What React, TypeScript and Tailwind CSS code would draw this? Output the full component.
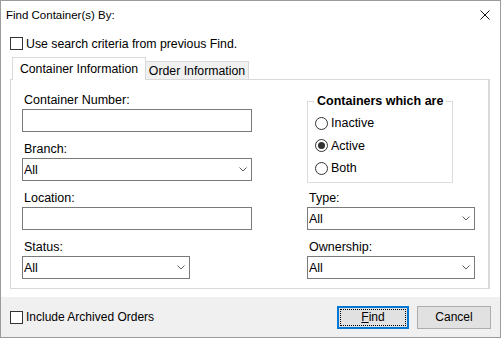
import React from "react";

const Chevron = () => (
  <svg width="8" height="5" viewBox="0 0 8 5" className="block">
    <path d="M0.5 0.5 L4 4 L7.5 0.5" fill="none" stroke="#606060" strokeWidth="1" />
  </svg>
);

function Label({ children }: { children: React.ReactNode }) {
  return <div className="h-[14px] leading-[14px] pl-[2px] mb-[2px]">{children}</div>;
}

function TextBox({ className }: { className: string }) {
  return <div className={`h-[23px] border border-[#7a7a7a] bg-white ${className}`} />;
}

function Select({ className }: { className: string }) {
  return (
    <div className={`h-[23px] border border-[#7a7a7a] bg-white flex items-center justify-between pl-[1px] pr-[4px] ${className}`}>
      <span className="leading-[14px]">All</span>
      <Chevron />
    </div>
  );
}

function CheckBox() {
  return <div className="w-[13px] h-[13px] border border-[#333333] bg-white shrink-0" />;
}

function Radio({ checked, label }: { checked?: boolean; label: string }) {
  return (
    <div className="h-[22.5px] flex items-center">
      <div className="w-[13px] h-[13px] rounded-full border border-[#333333] bg-white flex items-center justify-center shrink-0">
        {checked && <div className="w-[7px] h-[7px] rounded-full bg-[#333333]" />}
      </div>
      <span className="ml-[3px] leading-[14px]">{label}</span>
    </div>
  );
}

export default function App() {
  return (
    <div className="w-[501px] h-[338px] border border-[#9b9b9b] bg-white flex flex-col text-[12px] text-black font-['Liberation_Sans',Arial,sans-serif] overflow-hidden">
      {/* title bar */}
      <div className="h-[28px] shrink-0 flex items-center justify-between pl-[5px] pr-[10px]">
        <span className="leading-[14px] text-[11.5px]">Find Container(s) By:</span>
        <svg width="10" height="10" viewBox="0 0 10 10" className="block">
          <path d="M0.5 0.5 L9.5 9.5 M9.5 0.5 L0.5 9.5" stroke="#111" strokeWidth="1" fill="none" />
        </svg>
      </div>

      {/* use previous */}
      <div className="mt-[8px] h-[13px] flex items-center pl-[9px] shrink-0 text-[12.3px]">
        <CheckBox />
        <span className="ml-[3px] leading-[14px]">Use search criteria from previous Find.</span>
      </div>

      {/* tabs */}
      <div className="mt-[7px] h-[22px] flex items-end pl-[11px] shrink-0 relative z-10 text-[12.3px]">
        <div className="w-[134px] h-[23px] -mb-[1px] border-l border-t border-r border-[#d9d9d9] bg-white flex items-start justify-center pt-[4px]">
          <span className="leading-[14px]">Container Information</span>
        </div>
        <div className="w-[104px] h-[18px] -ml-[1px] border border-b-0 border-[#d9d9d9] bg-[#f0f0f0] flex items-center justify-center">
          <span className="leading-[14px]">Order Information</span>
        </div>
      </div>

      {/* panel */}
      <div className="ml-[9px] w-[480px] h-[210px] border border-[#d9d9d9] border-r-2 bg-white flex shrink-0 text-[12.5px]">
        <div className="ml-[11px] mt-[13px] w-[230px] flex flex-col gap-[10px]">
          <div>
            <Label>Container Number:</Label>
            <TextBox className="w-[230px]" />
          </div>
          <div>
            <Label>Branch:</Label>
            <Select className="w-[230px]" />
          </div>
          <div>
            <Label>Location:</Label>
            <TextBox className="w-[230px]" />
          </div>
          <div>
            <Label>Status:</Label>
            <Select className="w-[168px]" />
          </div>
        </div>

        <div className="ml-[55px] mt-[14px] w-[168px] flex flex-col">
          <fieldset className="w-[146px] h-[89px] border border-[#dcdcdc]">
            <legend className="ml-[6px] px-[3px] font-bold leading-[14px]">Containers which are</legend>
            <div className="pl-[7px] pt-[4px]">
              <Radio label="Inactive" />
              <Radio label="Active" checked />
              <Radio label="Both" />
            </div>
          </fieldset>
          <div className="mt-[8px]">
            <Label>Type:</Label>
            <Select className="w-[168px]" />
          </div>
          <div className="mt-[10px]">
            <Label>Ownership:</Label>
            <Select className="w-[168px]" />
          </div>
        </div>
      </div>

      <div className="h-[8px] shrink-0" />

      {/* footer */}
      <div className="flex-1 bg-[#f0f0f0] flex items-center justify-between pl-[9px] pr-[9px]">
        <div className="flex items-center">
          <CheckBox />
          <span className="ml-[3px] leading-[14px]">Include Archived Orders</span>
        </div>
        <div className="flex items-center gap-[8px]">
          <div className="w-[72px] h-[23px] border-2 border-[#0078d7] bg-[#e1e1e1] p-[1px]">
            <div className="w-full h-full border border-dotted border-black flex items-center justify-center">
              <span className="leading-[14px]"><span className="underline">F</span>ind</span>
            </div>
          </div>
          <div className="w-[74px] h-[23px] border border-[#adadad] bg-[#e1e1e1] flex items-center justify-center">
            <span className="leading-[14px]">Cancel</span>
          </div>
        </div>
      </div>
    </div>
  );
}
